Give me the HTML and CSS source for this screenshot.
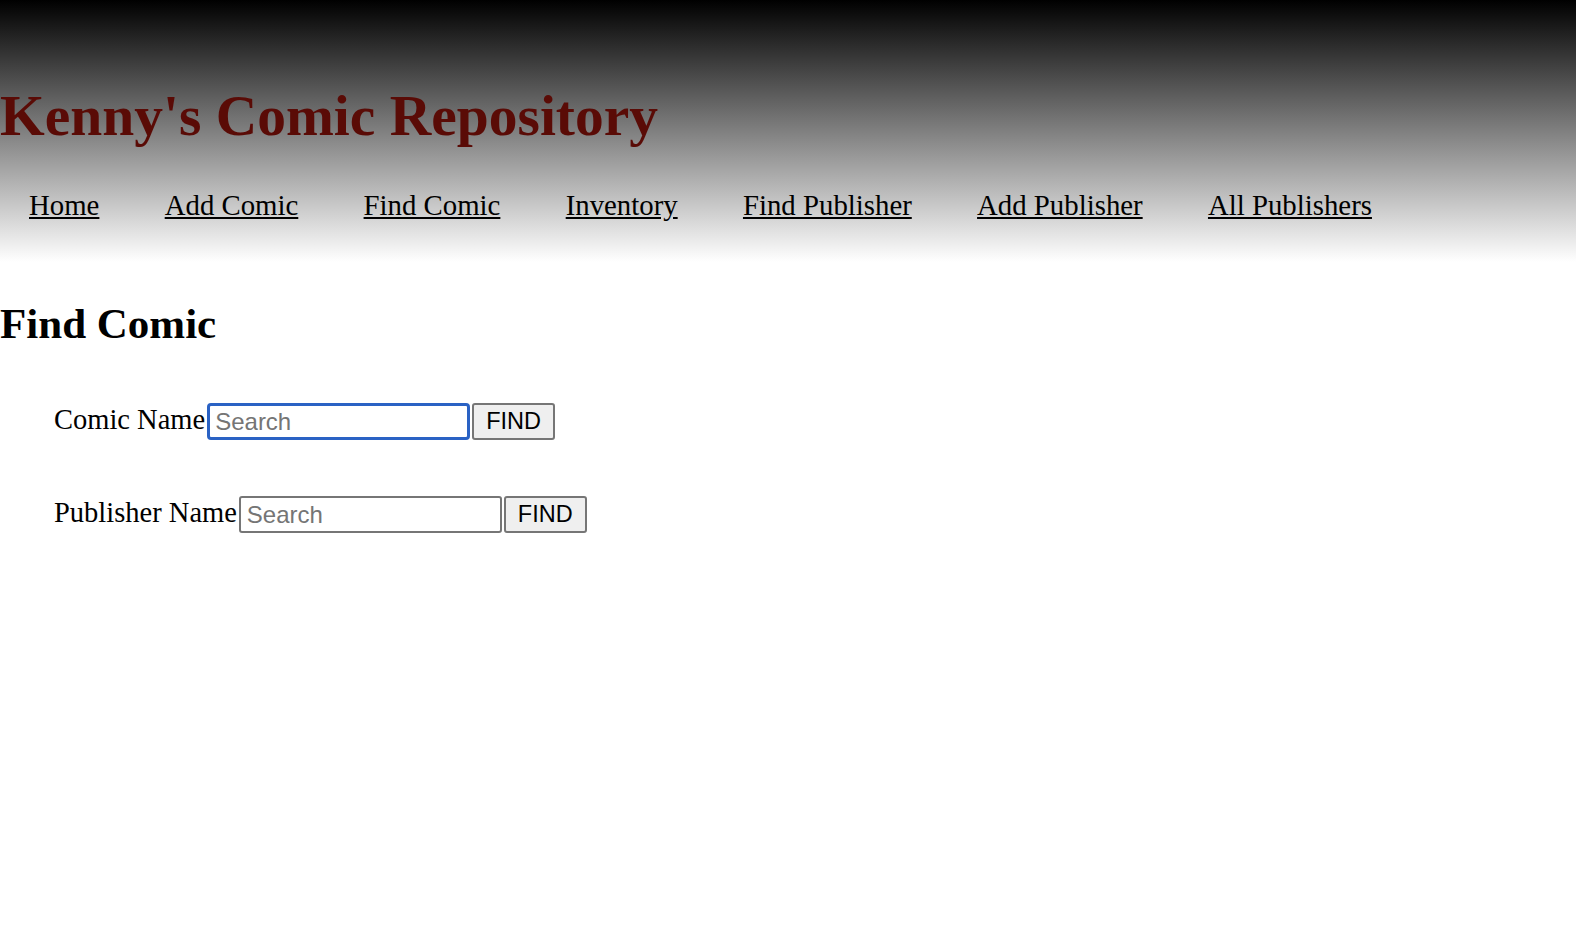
FILE: index.html
```html
<!DOCTYPE html>
<html>
<head>
<meta charset="utf-8">
<title>Find Comic</title>
<link rel="stylesheet" href="styles.css">
</head>
<body>
<header class="header">
  <h1 class="title">Kenny's Comic Repository</h1>
  <nav class="nav">
    <a href="#">Home</a>
    <a href="#">Add Comic</a>
    <a href="#">Find Comic</a>
    <a href="#">Inventory</a>
    <a href="#">Find Publisher</a>
    <a href="#">Add Publisher</a>
    <a href="#">All Publishers</a>
  </nav>
</header>
<main class="main">
  <h2 class="heading">Find Comic</h2>
  <form class="row">
    <label class="label">Comic Name</label><input class="search focused" type="text" placeholder="Search"><button class="btn" type="button">FIND</button>
  </form>
  <form class="row">
    <label class="label">Publisher Name</label><input class="search" type="text" placeholder="Search"><button class="btn" type="button">FIND</button>
  </form>
</main>
</body>
</html>
```
FILE: styles.css
```css
html, body {
  margin: 0;
  padding: 0;
  background: #fff;
  font-family: "Liberation Serif", "Times New Roman", serif;
}
.header {
  height: 262px;
  background: linear-gradient(to bottom, #000 0%, #fff 100%);
  padding-top: 81px;
  box-sizing: border-box;
}
.title {
  margin: 0;
  font-size: 57.5px;
  line-height: 70px;
  color: #5a0b06;
  font-weight: bold;
}
.nav {
  display: flex;
  gap: 65.3px;
  padding-left: 29px;
  margin-top: 37px;
  font-size: 28.8px;
  line-height: 34px;
}
.nav a {
  color: #000;
  text-decoration: underline;
}
.heading {
  margin: 37px 0 0 0;
  font-size: 43px;
  line-height: 50px;
  font-weight: bold;
}
.row {
  display: flex;
  align-items: center;
  padding-left: 54px;
  margin-top: 54px;
}
.row + .row {
  margin-top: 56px;
}
.label {
  font-size: 28.5px;
  position: relative;
  top: -2px;
}
.search {
  width: 263px;
  height: 37px;
  box-sizing: border-box;
  border: 2px solid #767676;
  border-radius: 3px;
  font-family: "Liberation Sans", Arial, sans-serif;
  font-size: 24px;
  padding: 0 6px;
  margin: 0 0 0 2px;
}
.search::placeholder {
  color: #757575;
}
.search.focused {
  border: 3px solid #2a62c4;
  border-radius: 4px;
  padding: 0 5px;
}
.btn {
  height: 37px;
  box-sizing: border-box;
  padding: 0 12px;
  margin: 0 0 0 2px;
  font-family: "Liberation Sans", Arial, sans-serif;
  font-size: 23.5px;
  background: #efefef;
  border: 2px solid #767676;
  border-radius: 3px;
  color: #000;
}
```
